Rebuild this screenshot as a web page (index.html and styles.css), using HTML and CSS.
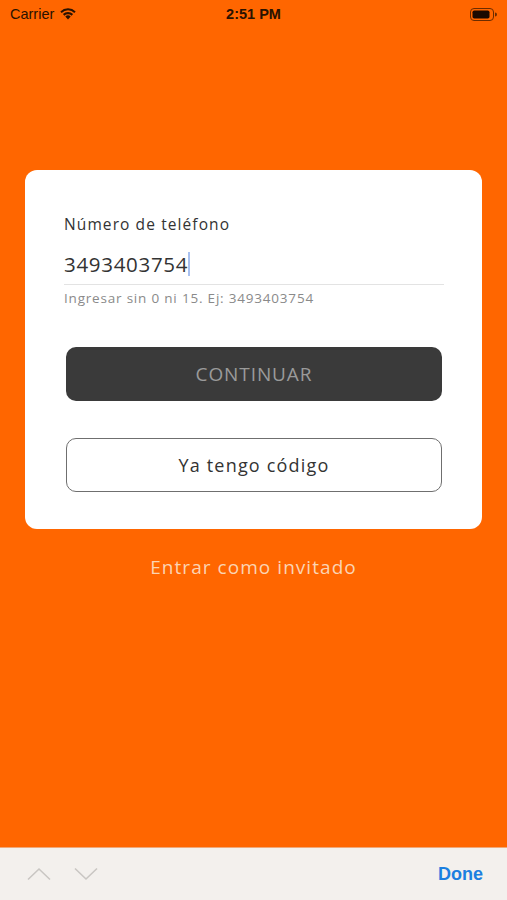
FILE: index.html
```html
<!DOCTYPE html>
<html>
<head>
<meta charset="utf-8">
<link rel="stylesheet" href="styles.css">
</head>
<body>
<div class="screen">
  <div class="status">
    <div class="status-left">
      <span class="carrier">Carrier</span>
      <svg class="wifi" width="18" height="13" viewBox="0 0 18 13">
        <path d="M9 12.5 L6.3 9.6 A3.9 3.9 0 0 1 11.7 9.6 Z" fill="#2a1200"/>
        <path d="M3.9 7.1 A7.4 7.4 0 0 1 14.1 7.1 L12.6 8.7 A5.2 5.2 0 0 0 5.4 8.7 Z" fill="#2a1200"/>
        <path d="M1.3 4.4 A11.1 11.1 0 0 1 16.7 4.4 L15.3 5.9 A9 9 0 0 0 2.7 5.9 Z" fill="#2a1200"/>
      </svg>
    </div>
    <div class="time">2:51 PM</div>
    <div class="status-right">
      <svg width="27" height="13" viewBox="0 0 27 13">
        <rect x="0.5" y="0.5" width="23" height="12" rx="3.5" fill="none" stroke="#6b2c00" stroke-width="1"/>
        <rect x="2.5" y="2.5" width="17" height="8" rx="1.8" fill="#1a0a00"/>
        <path d="M25 4.5 A2 2 0 0 1 25 8.5 Z" fill="#6b2c00"/>
      </svg>
    </div>
  </div>

  <main class="content">
    <div class="card">
      <div class="label">Número de teléfono</div>
      <div class="field">
        <span class="value">3493403754</span><span class="caret"></span>
      </div>
      <div class="hint">Ingresar sin 0 ni 15. Ej: 3493403754</div>
      <div class="btn btn-dark">CONTINUAR</div>
      <div class="btn btn-outline">Ya tengo código</div>
    </div>
    <div class="guest">Entrar como invitado</div>
  </main>

  <div class="toolbar">
    <div class="arrows">
      <svg width="24" height="14" viewBox="0 0 24 14"><path d="M1 12.5 L12 2 L23 12.5" fill="none" stroke="#c9c6c3" stroke-width="1.6"/></svg>
      <svg width="24" height="14" viewBox="0 0 24 14"><path d="M1 1.5 L12 12 L23 1.5" fill="none" stroke="#c9c6c3" stroke-width="1.6"/></svg>
    </div>
    <div class="done">Done</div>
  </div>
</div>
</body>
</html>
```

FILE: styles.css
```css
* { box-sizing: border-box; margin: 0; padding: 0; }
html, body { width: 507px; height: 900px; overflow: hidden; }
body { background: #ff6600; font-family: "Open Sans", "Liberation Sans", sans-serif; }

.screen { width: 507px; height: 900px; display: flex; flex-direction: column; }

.status {
  height: 28px;
  display: flex;
  align-items: center;
  justify-content: space-between;
  padding: 0 10px 0 10px;
  color: #2a1200;
  font-family: "Liberation Sans", sans-serif;
  position: relative;
}
.status-left { display: flex; align-items: center; gap: 5px; }
.carrier { font-size: 14.5px; }
.wifi { margin-top: -2px; }
.time {
  position: absolute; left: 0; right: 0; text-align: center;
  font-size: 14.5px; font-weight: bold;
}
.status-right { display: flex; align-items: center; }

.content {
  flex: 1;
  padding: 142px 25px 0 25px;
  display: flex;
  flex-direction: column;
  align-items: stretch;
}

.card {
  background: #fff;
  border-radius: 12px;
  height: 359px;
  padding: 43px 39px 0 39px;
  display: flex;
  flex-direction: column;
}
.label { font-size: 15.5px; color: #333; letter-spacing: 1.1px; line-height: 22px; }
.field {
  margin-top: 16px;
  height: 34px;
  border-bottom: 1px solid #e3e3e3;
  display: flex;
  align-items: flex-start;
  width: 380px;
}
.value { font-size: 20.5px; color: #333; line-height: 26px; letter-spacing: 0.7px; }
.caret { width: 2px; height: 24px; background: #a9c1f0; margin-top: 1px; margin-left: 0px; }
.hint { margin-top: 4px; font-size: 13.5px; color: #8a8a8a; letter-spacing: 0.8px; line-height: 18px; }

.btn {
  width: 376px;
  height: 54px;
  margin-left: 2px;
  border-radius: 10px;
  display: flex;
  align-items: center;
  justify-content: center;
}
.btn-dark {
  margin-top: 40px;
  background: #3a3a3a;
  color: #9a9a9a;
  font-size: 19px;
  letter-spacing: 0.9px;
}
.btn-outline {
  margin-top: 37px;
  border: 1.5px solid #6f6f6f;
  color: #333;
  font-size: 18px;
  letter-spacing: 1.2px;
}

.guest {
  margin-top: 25px;
  text-align: center;
  color: #fbd4b4;
  font-size: 19px;
  letter-spacing: 1.05px;
}

.toolbar {
  height: 53px;
  background: #f3f0ed;
  border-top: 1px solid #f0a878;
  display: flex;
  align-items: center;
  justify-content: space-between;
  padding: 0 24px 0 27px;
}
.arrows { display: flex; gap: 23px; }
.done { color: #1b7fe0; font-size: 18px; font-weight: bold; font-family: "Liberation Sans", sans-serif; }
```
